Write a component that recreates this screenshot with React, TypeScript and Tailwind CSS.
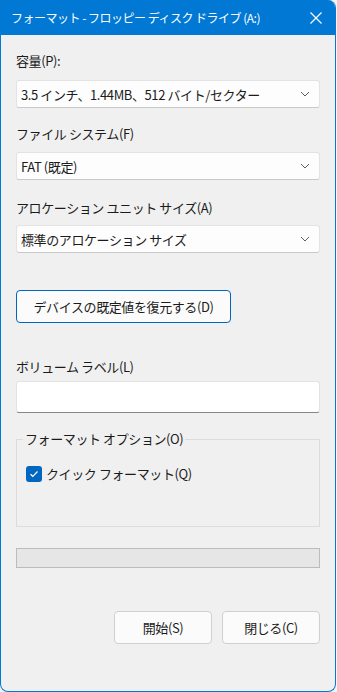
import React from 'react';

const font = { fontFamily: '"Noto Sans CJK JP", "Noto Sans", sans-serif' };

function Chevron() {
  return (
    <svg width="10" height="6" viewBox="0 0 10 6" className="shrink-0">
      <path d="M1 1 L5 5 L9 1" fill="none" stroke="#5f5f5f" strokeWidth="1" />
    </svg>
  );
}

function Combo({ value }: { value: string }) {
  return (
    <div className="flex h-[28px] items-center justify-between rounded-[3px] border border-[#e3e3e3] border-b-[#c8c8c8] bg-[#fdfdfd] pl-[4px] pr-[9px] text-[13px] text-[#1b1b1b]">
      <span className="leading-none">{value}</span>
      <Chevron />
    </div>
  );
}

function Label({ text, className }: { text: string; className: string }) {
  return <div className={`h-[18px] text-[13px] leading-[18px] text-[#1b1b1b] ${className}`}>{text}</div>;
}

export default function App() {
  return (
    <div className="h-[692px] w-[337px] bg-[#f3f3f3] tracking-[-0.4px]" style={font}>
      <div className="flex h-[692px] w-[336px] flex-col overflow-hidden rounded-b-[8px] rounded-tr-[8px] border border-t-0 border-[#0078d4] bg-[#f0f0f0]">
        {/* Title bar */}
        <div className="flex h-[35px] shrink-0 items-center justify-between bg-[#0078d4] pl-[10px] pr-[13px] text-white">
          <span className="text-[12px] leading-none tracking-[-0.5px]">フォーマット - フロッピー ディスク ドライブ (A:)</span>
          <svg width="12" height="12" viewBox="0 0 12 12">
            <path d="M0.5 0.5 L11.5 11.5 M11.5 0.5 L0.5 11.5" stroke="white" strokeWidth="1.2" />
          </svg>
        </div>

        <div className="flex flex-col px-[15px]">
          <Label text="容量(P):" className="mt-[17px]" />
          <div className="mt-[10px]">
            <Combo value="3.5 インチ、1.44MB、512 バイト/セクター" />
          </div>

          <Label text="ファイル システム(F)" className="mt-[17px]" />
          <div className="mt-[9px]">
            <Combo value="FAT (既定)" />
          </div>

          <Label text="アロケーション ユニット サイズ(A)" className="mt-[19px]" />
          <div className="mt-[8px]">
            <Combo value="標準のアロケーション サイズ" />
          </div>

          <button className="mt-[37px] flex h-[33px] w-[215px] items-center justify-center rounded-[4px] border border-[#0067c0] bg-[#fbfbfb] text-[13px] text-[#1b1b1b]">
            デバイスの既定値を復元する(D)
          </button>

          <Label text="ボリューム ラベル(L)" className="mt-[35px]" />
          <div className="mt-[5px] h-[32px] rounded-[3px] border border-[#e3e3e3] border-b-[#868686] bg-white" />

          {/* Group box */}
          <div className="relative mt-[26px] h-[88px] border border-[#dcdcdc]">
            <div className="absolute left-[6px] top-[-10px] bg-[#f0f0f0] px-[2px] text-[13px] leading-[18px] text-[#1b1b1b]">
              フォーマット オプション(O)
            </div>
            <div className="ml-[9px] mt-[25px] flex items-center gap-[4px]">
              <span className="flex h-[16px] w-[16px] items-center justify-center rounded-[3px] bg-[#0067c0]">
                <svg width="10" height="8" viewBox="0 0 10 8">
                  <path d="M1.5 4.2 L3.8 6.3 L8.5 1.5" fill="none" stroke="white" strokeWidth="1.2" />
                </svg>
              </span>
              <span className="text-[13px] leading-[18px] text-[#1b1b1b]">クイック フォーマット(Q)</span>
            </div>
          </div>

          {/* Progress */}
          <div className="mt-[21px] h-[20px] border border-[#bcbcbc] bg-[#e6e6e6]" />

          <div className="mt-[43px] flex justify-end gap-[10px]">
            <button className="h-[33px] w-[98px] rounded-[4px] border border-[#d0d0d0] bg-[#fbfbfb] text-[13px] text-[#1b1b1b]">
              開始(S)
            </button>
            <button className="h-[33px] w-[98px] rounded-[4px] border border-[#d0d0d0] bg-[#fbfbfb] text-[13px] text-[#1b1b1b]">
              閉じる(C)
            </button>
          </div>
        </div>
      </div>
    </div>
  );
}
